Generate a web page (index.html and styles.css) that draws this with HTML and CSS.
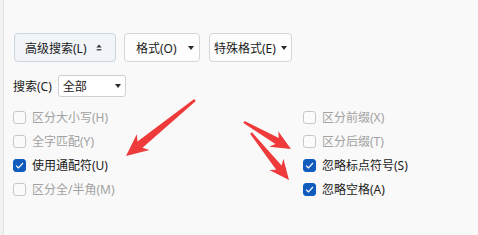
FILE: index.html
```html
<!DOCTYPE html>
<html lang="zh-CN">
<head>
<meta charset="utf-8">
<link rel="stylesheet" href="styles.css">
</head>
<body>
<div class="page">
  <div class="edge"></div>
  <div class="content">
    <div class="toolbar">
      <button class="btn btn-active w1">高级搜索(L)
        <svg class="upc" width="6" height="7" viewBox="0 0 6 7"><path d="M3 0.5 L5.6 3.6 H0.4 Z" fill="#333"/><rect x="0.6" y="5.2" width="4.8" height="1.2" fill="#333"/></svg>
      </button>
      <button class="btn w2">格式(O)<span class="tri"></span></button>
      <button class="btn w3">特殊格式(E)<span class="tri tri-tight"></span></button>
    </div>
    <div class="search-row">
      <span class="label">搜索(C)</span>
      <div class="select"><span>全部</span><span class="tri"></span></div>
    </div>
    <div class="options">
      <div class="col col-left">
        <div class="opt off"><span class="box"></span>区分大小写(H)</div>
        <div class="opt off"><span class="box"></span>全字匹配(Y)</div>
        <div class="opt"><span class="box checked"><svg width="9" height="7" viewBox="0 0 9 7"><path d="M1 3.6 L3.4 5.8 L8 1" fill="none" stroke="#fff" stroke-width="1.2"/></svg></span>使用通配符(U)</div>
        <div class="opt off"><span class="box"></span>区分全/半角(M)</div>
      </div>
      <div class="col">
        <div class="opt off"><span class="box"></span>区分前缀(X)</div>
        <div class="opt off"><span class="box"></span>区分后缀(T)</div>
        <div class="opt"><span class="box checked"><svg width="9" height="7" viewBox="0 0 9 7"><path d="M1 3.6 L3.4 5.8 L8 1" fill="none" stroke="#fff" stroke-width="1.2"/></svg></span>忽略标点符号(S)</div>
        <div class="opt"><span class="box checked"><svg width="9" height="7" viewBox="0 0 9 7"><path d="M1 3.6 L3.4 5.8 L8 1" fill="none" stroke="#fff" stroke-width="1.2"/></svg></span>忽略空格(A)</div>
      </div>
    </div>
  </div>
  <svg class="arrows" width="478" height="235" viewBox="0 0 478 235">
    <polygon fill="#ee3a3b" points="195.8,101.1 142.5,147.8 149.4,149.9 126,156 136.8,134.3 137.5,141.6 194.2,98.9"/>
    <polygon fill="#ee3a3b" points="243.4,123.0 275.4,144.0 269.2,146.8 291,149 278.2,131.2 278.8,138.0 244.6,121.0"/>
    <polygon fill="#ee3a3b" points="250.1,133.7 276.2,169.8 269.4,170.1 289,180 283.4,158.7 281.6,165.4 251.9,132.3"/>
  </svg>
</div>
</body>
</html>
```
FILE: styles.css
```css
html, body {
  margin: 0;
  padding: 0;
  background: #f9f9f9;
}
.page {
  position: relative;
  display: flex;
  width: 478px;
  height: 235px;
  overflow: hidden;
  font-family: "Noto Sans", "Noto Sans CJK SC", sans-serif;
  font-size: 12px;
  color: #1b1b1b;
}
.edge {
  width: 3px;
  background: #f2f2f2;
  border-right: 1px solid #e4e4e4;
  flex: none;
}
.content {
  flex: 1;
  padding: 33px 0 0 9px;
  display: flex;
  flex-direction: column;
}
.toolbar {
  display: flex;
  gap: 8px;
  margin-left: 1px;
  height: 29px;
}
.btn {
  box-sizing: border-box;
  height: 29px;
  display: flex;
  align-items: center;
  padding: 0 0 0 10px;
  border: 1px solid #d6d6d6;
  border-radius: 4px;
  background: #fdfdfd;
  font: inherit;
  color: #1b1b1b;
  white-space: nowrap;
}
.btn-active {
  background: #f1f4f8;
  border-color: #cdd5de;
}
.w1 { width: 102px; }
.w2 { width: 76px; padding-left: 11px; }
.w3 { width: 83px; padding-left: 4px; margin-left: 1px; }
.upc { margin-left: 9px; }
.tri {
  display: inline-block;
  width: 0;
  height: 0;
  border-left: 3.5px solid transparent;
  border-right: 3.5px solid transparent;
  border-top: 4px solid #2a2a2a;
  margin-left: 11px;
}
.tri-tight { margin-left: 5px; }
.search-row {
  display: flex;
  align-items: center;
  margin-top: 13px;
  height: 22px;
}
.label { margin-left: 0; }
.select {
  box-sizing: border-box;
  width: 68px;
  height: 22px;
  margin-left: 6px;
  display: flex;
  align-items: center;
  justify-content: space-between;
  padding: 0 4px 0 4px;
  background: #fff;
  border: 1px solid #cfcfcf;
  border-radius: 3px;
}
.select .tri { margin-left: 0; }
.options {
  display: flex;
  margin-top: 8px;
}
.col {
  display: flex;
  flex-direction: column;
}
.col-left { width: 290px; }
.opt {
  height: 24px;
  display: flex;
  align-items: center;
  white-space: nowrap;
}
.opt.off { color: #a2a2a2; }
.box {
  box-sizing: border-box;
  width: 13px;
  height: 13px;
  border: 1px solid #c7c7c7;
  border-radius: 3px;
  background: #fbfbfb;
  margin-right: 6px;
  flex: none;
  display: flex;
  align-items: center;
  justify-content: center;
}
.box.checked {
  background: #0f5cbd;
  border-color: #0f5cbd;
}
.arrows {
  position: absolute;
  left: 0;
  top: 0;
  pointer-events: none;
}
```
